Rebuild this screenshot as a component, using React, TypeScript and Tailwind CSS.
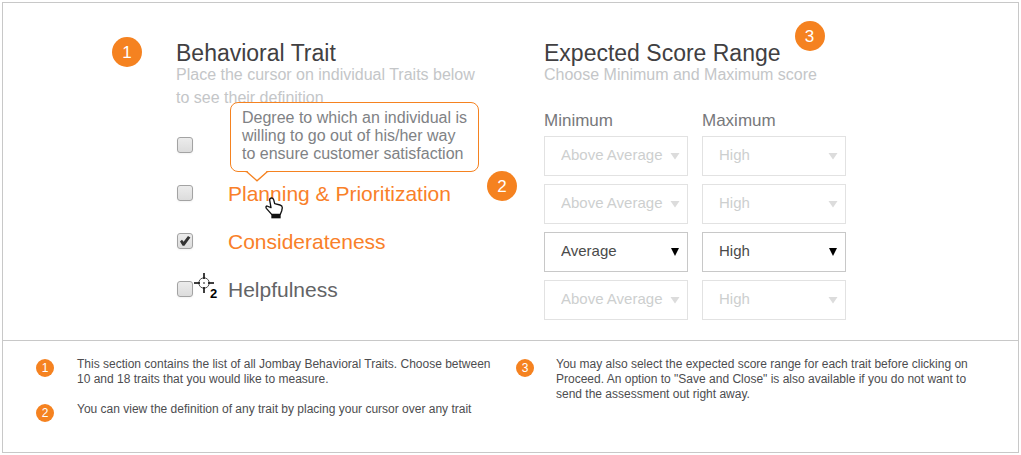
import { useState, type ReactNode } from "react";

const LEVELS = ["Low", "Below Average", "Average", "Above Average", "High"];

function Badge({ children, small = false }: { children: ReactNode; small?: boolean }) {
  return (
    <span
      className={
        small
          ? "flex size-[18px] shrink-0 items-center justify-center rounded-full bg-[#f58220] text-xs text-white"
          : "flex size-[30px] shrink-0 items-center justify-center rounded-full bg-[#f58220] text-[17px] leading-none text-white"
      }
    >
      {children}
    </span>
  );
}

function Checkbox({ id, label, initial = false }: { id: string; label?: string; initial?: boolean }) {
  const [on, setOn] = useState(initial);
  return (
    <span className="relative ml-px size-4 shrink-0">
      <input
        id={id}
        type="checkbox"
        aria-label={label}
        checked={on}
        onChange={(e) => setOn(e.target.checked)}
        className="block size-4 appearance-none rounded-[3px] border border-[#a3a3a3] bg-linear-to-b from-[#ececec] to-[#dcdcdc] shadow-xs"
      />
      {on && (
        <svg viewBox="0 0 16 16" className="pointer-events-none absolute inset-0 size-4" aria-hidden="true">
          <path d="M3 8.6 5 6.8 6.6 8.8 11 3 13.4 4.4 7.4 12.8 5.6 12.8Z" fill="#333" />
        </svg>
      )}
    </span>
  );
}

function ScoreSelect({ label, value, active }: { label: string; value: string; active: boolean }) {
  return (
    <div className="relative">
      <select
        aria-label={label}
        defaultValue={value}
        disabled={!active}
        className={
          active
            ? "block h-10 w-full appearance-none border border-[#c8c8c8] bg-white pr-5 pb-0.5 pl-4 text-[15px] text-[#4a4a4a]"
            : "block h-10 w-full appearance-none border border-[#e2e2e2] bg-white pr-5 pb-0.5 pl-4 text-[15px] text-[#cdcfcf] opacity-100"
        }
      >
        {LEVELS.map((level) => (
          <option key={level}>{level}</option>
        ))}
      </select>
      <svg
        viewBox="0 0 10 8"
        className={
          active
            ? "pointer-events-none absolute top-4 right-2 h-2 w-2.5 text-black"
            : "pointer-events-none absolute top-4 right-2 h-2 w-2.5 text-[#dcdcdc]"
        }
        aria-hidden="true"
      >
        <path d={active ? "M1 0H9L5 8Z" : "M0.5 1H9.5L5 7.5Z"} fill="currentColor" />
      </svg>
    </div>
  );
}

function Tooltip() {
  return (
    <div
      role="tooltip"
      className="absolute bottom-[33px] left-[54px] w-[249px] rounded-lg border border-[#f58220] bg-white px-[11px] pt-1.5 pb-2 text-base leading-[18px] whitespace-nowrap text-[#808285]"
    >
      Degree to which an individual is
      <br />
      willing to go out of his/her way
      <br />
      to ensure customer satisfaction
      <svg viewBox="0 0 24 12" className="absolute top-full left-[14px] h-3 w-6" aria-hidden="true">
        <path d="M1 0H23L12 10Z" fill="#fff" transform="translate(0 -1)" />
        <path d="M0.5 0.5H1.5L12 9.8 22.5 0.5H23.5" fill="none" stroke="#f58220" strokeWidth="1.3" />
      </svg>
    </div>
  );
}

function HandCursor() {
  return (
    <svg viewBox="0 0 54 66" className="absolute top-4 left-[89px] h-[22px] w-[18px]" aria-hidden="true">
      <path
        d="M14 9Q14 3 20 3Q24 3 26 8L29 20L45 24Q52 26 52 32L50 42L46 52H20L4 34Q1 28 6 27L18 32Z"
        fill="#fff"
        stroke="#111"
        strokeWidth="4"
        strokeLinejoin="round"
      />
      <path d="M19 51H47V64H19Z" fill="#111" />
    </svg>
  );
}

function TargetCursor() {
  return (
    <span className="absolute -top-1 left-[18px] text-black" aria-hidden="true">
      <svg viewBox="0 0 20 20" className="size-5" fill="none" stroke="currentColor">
        <circle cx="10" cy="10" r="5.2" stroke="#555" />
        <path d="M10 0V6M10 14V20M0 10H6M14 10H20" strokeWidth="1.5" />
        <circle cx="10" cy="10" r="0.8" fill="currentColor" stroke="none" />
      </svg>
      <span className="absolute top-3.5 left-4 text-[13px] leading-none font-bold">2</span>
    </span>
  );
}

const SCORES = [
  { trait: "Trait 1", min: "Above Average", active: false },
  { trait: "Planning & Prioritization", min: "Above Average", active: false },
  { trait: "Considerateness", min: "Average", active: true },
  { trait: "Helpfulness", min: "Above Average", active: false },
];

export default function App() {
  return (
    <div className="bg-white p-0.5 font-['Liberation_Sans',Arial,sans-serif]">
      <main className="border border-[#c8c8c8]">
        <section className="flex items-start border-b border-[#c8c8c8] pb-5 pl-[109px]">
          <div className="mt-[34px] mr-[34px]">
            <Badge>1</Badge>
          </div>

          <div className="w-[311px] shrink-0 pt-10">
            <h2 className="text-[23px] leading-5 text-[#414042]">Behavioral Trait</h2>
            <p className="text-base leading-[23px] whitespace-nowrap text-[#c4c6c8]">
              Place the cursor on individual Traits below
              <br />
              to see their definition
            </p>
            <ul className="mt-6 flex flex-col gap-6 text-[21px] leading-[26px]">
              <li className="flex h-6 items-center">
                <Checkbox id="trait-1" label="Trait 1" />
              </li>
              <li className="relative flex h-6 items-center gap-[35px]">
                <Checkbox id="trait-2" />
                <label htmlFor="trait-2" className="pt-0.5 whitespace-nowrap text-[#f98029]">
                  Planning &amp; Prioritization
                </label>
                <Tooltip />
                <HandCursor />
              </li>
              <li className="flex h-6 items-center gap-[35px]">
                <Checkbox id="trait-3" initial />
                <label htmlFor="trait-3" className="pt-0.5 text-[#f98029]">
                  Considerateness
                </label>
              </li>
              <li className="relative flex h-6 items-center gap-[35px]">
                <Checkbox id="trait-4" />
                <label htmlFor="trait-4" className="pt-0.5 text-[#636466]">
                  Helpfulness
                </label>
                <TargetCursor />
              </li>
            </ul>
          </div>

          <div className="mt-[168px] mr-[27px]">
            <Badge>2</Badge>
          </div>

          <div className="w-[302px] shrink-0 pt-[18px]">
            <div className="flex h-[42px] items-start gap-3.5">
              <h2 className="self-end text-[23px] leading-5 whitespace-nowrap text-[#414042]">Expected Score Range</h2>
              <Badge>3</Badge>
            </div>
            <p className="text-base leading-[23px] whitespace-nowrap text-[#c4c6c8]">Choose Minimum and Maximum score</p>
            <div className="mt-[25px] grid grid-cols-2 gap-x-3.5 text-[17px] leading-5 text-[#77787b]">
              <h3>Minimum</h3>
              <h3>Maximum</h3>
            </div>
            <div className="mt-[5px] grid grid-cols-2 gap-x-3.5 gap-y-2">
              {SCORES.map((s) => (
                <div key={s.trait} className="contents">
                  <ScoreSelect label={`Minimum score for ${s.trait}`} value={s.min} active={s.active} />
                  <ScoreSelect label={`Maximum score for ${s.trait}`} value="High" active={s.active} />
                </div>
              ))}
            </div>
          </div>
        </section>

        <section className="grid grid-cols-2 pt-4 pr-[22px] pb-[30px] pl-[33px] text-xs leading-[15px] text-[#4d4d4f]">
          <ol className="flex flex-col gap-[15px] pr-4">
            <li className="flex gap-[23px]">
              <div className="pt-0.5">
                <Badge small>1</Badge>
              </div>
              <p>
                This section contains the list of all Jombay Behavioral Traits. Choose between 10 and 18 traits that you
                would like to measure.
              </p>
            </li>
            <li className="flex gap-[23px]">
              <div className="pt-0.5">
                <Badge small>2</Badge>
              </div>
              <p>You can view the definition of any trait by placing your cursor over any trait</p>
            </li>
          </ol>
          <div className="flex gap-[22px] pr-4">
            <div className="pt-0.5">
              <Badge small>3</Badge>
            </div>
            <p>
              You may also select the expected score range for each trait before clicking on Proceed. An option to
              "Save and Close" is also available if you do not want to send the assessment out right away.
            </p>
          </div>
        </section>
      </main>
    </div>
  );
}
